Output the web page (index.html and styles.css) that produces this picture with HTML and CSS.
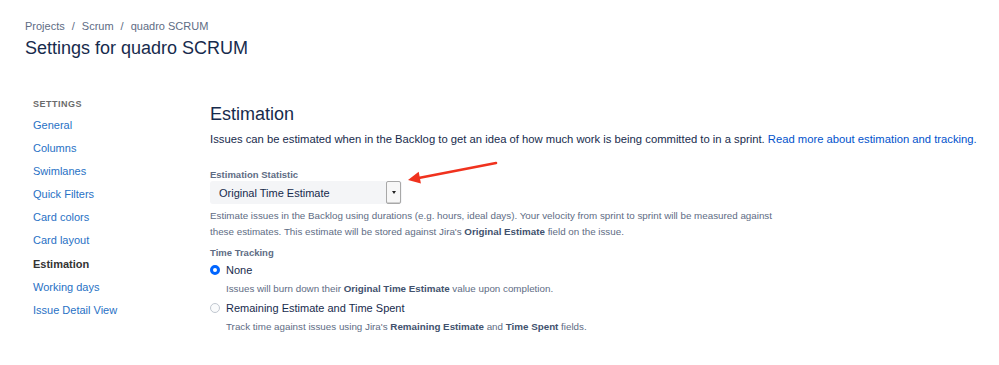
FILE: index.html
```html
<!doctype html>
<html lang="en">

<head>
    <meta charset="utf-8">
    <title>Settings for quadro SCRUM</title>
    <link rel="stylesheet" href="styles.css">
</head>

<body>
    <header class="page-header">
        <nav class="breadcrumbs">
            <a href="#">Projects</a><span class="sep">/</span><a href="#">Scrum</a><span class="sep">/</span><a href="#">quadro SCRUM</a>
        </nav>
        <h1>Settings for quadro SCRUM</h1>
    </header>

    <div class="layout">
        <aside class="sidebar">
            <h4>Settings</h4>
            <ul>
                <li><a href="#">General</a></li>
                <li><a href="#">Columns</a></li>
                <li><a href="#">Swimlanes</a></li>
                <li><a href="#">Quick Filters</a></li>
                <li><a href="#">Card colors</a></li>
                <li><a href="#">Card layout</a></li>
                <li class="current">Estimation</li>
                <li><a href="#">Working days</a></li>
                <li><a href="#">Issue Detail View</a></li>
            </ul>
        </aside>

        <main class="content">
            <h2>Estimation</h2>
            <p class="intro">Issues can be estimated when in the Backlog to get an idea of how much work is being committed to in a sprint. <a href="#">Read more about estimation and tracking.</a></p>

            <div class="field">
                <label class="field-label">Estimation Statistic</label>
                <div class="select">
                    <span class="select-value">Original Time Estimate</span>
                    <span class="select-btn"><span class="caret"></span></span>
                    <svg class="callout" width="100" height="30" viewBox="0 0 100 30">
                        <line x1="92" y1="4" x2="12" y2="19.5" stroke="#f0321e" stroke-width="2.6" stroke-linecap="round"/>
                        <polygon points="4,21 14.7,12.8 16.9,24.6" fill="#f0321e"/>
                    </svg>
                </div>
                <p class="help">Estimate issues in the Backlog using durations (e.g. hours, ideal days). Your velocity from sprint to sprint will be measured against these estimates. This estimate will be stored against Jira's <b>Original Estimate</b> field on the issue.</p>
            </div>

            <div class="field">
                <label class="field-label">Time Tracking</label>
                <div class="radio">
                    <span class="dot checked"></span>
                    <span class="radio-label">None</span>
                </div>
                <p class="help indent">Issues will burn down their <b>Original Time Estimate</b> value upon completion.</p>
                <div class="radio">
                    <span class="dot"></span>
                    <span class="radio-label">Remaining Estimate and Time Spent</span>
                </div>
                <p class="help indent">Track time against issues using Jira's <b>Remaining Estimate</b> and <b>Time Spent</b> fields.</p>
            </div>
        </main>
    </div>
</body>

</html>
```

FILE: styles.css
```css
html, body {
    margin: 0;
    padding: 0;
    background: #ffffff;
    font-family: 'Liberation Sans', Arial, sans-serif;
    color: #172b4d;
}

a {
    color: #0052cc;
    text-decoration: none;
}

.page-header {
    padding: 18px 25px 0 25px;
}

.breadcrumbs {
    font-size: 11px;
    line-height: 16px;
    color: #5e6c84;
}

.breadcrumbs a { color: #5e6c84; }
.breadcrumbs .sep { margin: 0 7px; }

h1 {
    margin: 2px 0 0 0;
    font-size: 18px;
    line-height: 24px;
    font-weight: 500;
    color: #172b4d;
}

.layout {
    display: flex;
    padding: 37px 0 0 33px;
}

.sidebar {
    width: 177px;
    flex: none;
}

.sidebar h4 {
    margin: 0 0 3px 0;
    font-size: 9px;
    line-height: 14px;
    font-weight: 700;
    text-transform: uppercase;
    letter-spacing: 0.5px;
    color: #6b6b6b;
}

.sidebar ul {
    list-style: none;
    margin: 0;
    padding: 0;
}

.sidebar li {
    font-size: 11px;
    line-height: 23.1px;
}

.sidebar li a { color: #2871c5; }
.sidebar li.current { font-weight: 700; color: #333333; }

.content {
    flex: 1;
}

h2 {
    margin: 6px 0 0 0;
    font-size: 18px;
    line-height: 22px;
    font-weight: 500;
    color: #172b4d;
}

.intro {
    margin: 6px 0 0 0;
    font-size: 11.25px;
    line-height: 16px;
    color: #172b4d;
}

.field { margin-top: 22px; }
.field + .field { margin-top: 7px; }

.field-label {
    display: block;
    font-size: 9.5px;
    line-height: 12px;
    font-weight: 700;
    color: #5e6c84;
}

.select {
    position: relative;
    display: flex;
    align-items: center;
    width: 192px;
    height: 23px;
    background: #f4f5f7;
    border-radius: 3px;
}

.select-value {
    flex: 1;
    padding-left: 9px;
    font-size: 11px;
    color: #172b4d;
}

.select-btn {
    display: flex;
    align-items: center;
    justify-content: center;
    width: 13px;
    height: 21px;
    margin-right: 1px;
    background: #f7f7f7;
    border: 1px solid #a8a8a8;
    border-radius: 2px;
    box-shadow: inset 0 -1px 0 #d0d0d0;
}

.caret {
    width: 0;
    height: 0;
    border-left: 2.5px solid transparent;
    border-right: 2.5px solid transparent;
    border-top: 3px solid #222222;
}

.callout {
    position: absolute;
    left: 194px;
    top: -22px;
}

.help {
    margin: 4px 0 0 0;
    max-width: 572px;
    font-size: 9.8px;
    line-height: 16px;
    color: #5e6c84;
}

.help b { color: #42526e; }
.help.indent { margin: 2px 0 2px 16px; }

.radio {
    display: flex;
    align-items: center;
    height: 18px;
    margin-top: 2px;
}

.dot {
    box-sizing: border-box;
    width: 10px;
    height: 10px;
    border-radius: 50%;
    border: 1px solid #c1c7d0;
    background: #fafbfc;
}

.dot.checked {
    border: 3px solid #0065ff;
    background: #ffffff;
}

.radio-label {
    margin-left: 6px;
    font-size: 11px;
    color: #172b4d;
}
```
